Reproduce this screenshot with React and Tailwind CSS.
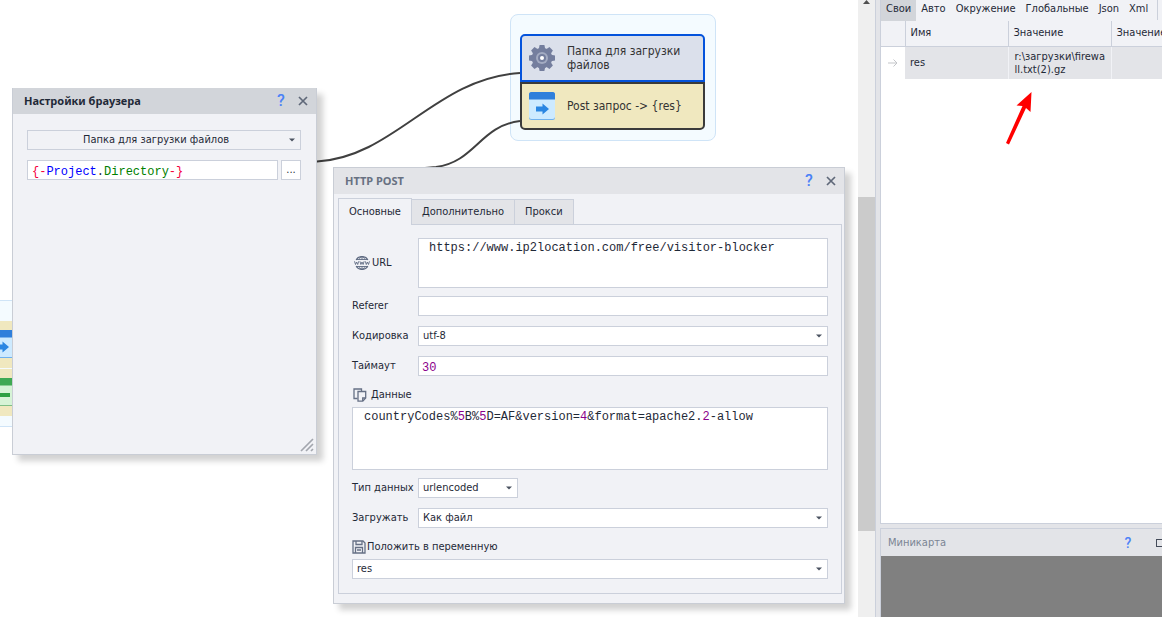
import React from "react";

const UI = "font-['DejaVu_Sans_Condensed','Noto_Sans',sans-serif] text-[11px] leading-[14px] text-[#1f2937]";
const FIELD = "h-5 border border-[#cbd0db] bg-white outline-none rounded-none";
const MONO = "font-['Liberation_Mono',monospace] text-[12px] leading-[14px]";

function Caret() {
  return (
    <svg className="pointer-events-none absolute right-1.5 top-2" width="6" height="4" viewBox="0 0 6 4" aria-hidden="true">
      <path d="M0 0.5H6L3 3.5Z" fill="#4b5260" />
    </svg>
  );
}

function Select({ id, value, label, className = "", selectClass = "bg-white pl-1 text-left" }) {
  return (
    <div className={"relative " + className}>
      <select
        id={id}
        aria-label={label}
        defaultValue={value}
        className={"block h-5 w-full appearance-none rounded-none border border-[#cbd0db] pr-4 outline-none " + selectClass}
      >
        <option>{value}</option>
      </select>
      <Caret />
    </div>
  );
}

function WindowHeader({ title, className }) {
  return (
    <header className={"flex h-[26px] items-center pl-[11px] pr-[7px] " + className}>
      <h2 className="flex-1 font-['Noto_Sans',sans-serif] text-[11px] font-bold">{title}</h2>
      <button type="button" aria-label="Справка" className="mr-2.5 w-3 text-[16px] font-medium leading-4 text-[#4c82f7] font-[Roboto,sans-serif]">
        ?
      </button>
      <button type="button" aria-label="Закрыть" className="flex h-3 w-3 items-center justify-center">
        <svg width="10" height="10" viewBox="0 0 10 10" aria-hidden="true">
          <path d="M1 1L9 9M9 1L1 9" stroke="#5f6879" strokeWidth="1.7" />
        </svg>
      </button>
    </header>
  );
}

function GearIcon() {
  const teeth = [0, 45, 90, 135, 180, 225, 270, 315];
  return (
    <svg width="28" height="28" viewBox="0 0 28 28" aria-hidden="true">
      <g fill="#747e9e">
        {teeth.map((a) => (
          <path key={a} d="M10.800 5L11.600 1H16.400L17.200 5Z" transform={`rotate(${a} 14 14)`} />
        ))}
        <circle cx="14" cy="14" r="10.3" />
      </g>
      <circle cx="14" cy="14" r="6" fill="#a3abc2" />
      <circle cx="14" cy="14" r="4" fill="#747e9e" />
      <circle cx="14" cy="14" r="2" fill="#fff" />
    </svg>
  );
}

function PageIcon({ green = false }) {
  return (
    <svg width="28" height="28" viewBox="0 0 28 28" aria-hidden="true">
      <rect x="1" y="0" width="26" height="28" rx="2.5" fill={green ? "#7fbf87" : "#6fb1ee"} />
      <path d="M1 7H27V25Q27 27 24.500 27H3.500Q1 27 1 25Z" fill={green ? "#d6f3d6" : "#cdeaff"} />
      <path d="M3.500 0H24.500Q27 0 27 2.500V7.500H1V2.500Q1 0 3.500 0Z" fill={green ? "#3fa953" : "#2f7fdb"} />
      {green ? (
        <path d="M8 15H22V19H8Z" fill="#2ea043" />
      ) : (
        <path d="M8 14.500H14.500V11.500L21 17L14.500 22.500V19.500H8Z" fill="#2a86e2" />
      )}
    </svg>
  );
}

function WwwIcon() {
  return (
    <svg width="16" height="14" viewBox="0 0 16 14" aria-hidden="true" fill="none" stroke="#5f6b82">
      <path d="M2.200 4C3.300 1.800 5.500 0.600 8 0.600S12.700 1.800 13.800 4M2.200 10C3.300 12.200 5.500 13.400 8 13.400S12.700 12.200 13.800 10" strokeWidth="1.300" />
      <path d="M8 0.600V3.500M8 10.500V13.400M5.200 3.500C5.600 2.200 6.500 1 8 0.600C9.500 1 10.400 2.200 10.800 3.500M5.200 10.500C5.600 11.800 6.500 13 8 13.400C9.500 13 10.400 11.800 10.800 10.500M2.500 3.500H13.500M2.500 10.500H13.500" strokeWidth="0.9" />
      <path d="M0.500 5.300L1.500 8.500L2.600 6L3.700 8.500L4.700 5.300M5.900 5.300L6.900 8.500L8 6L9.100 8.500L10.100 5.300M11.300 5.300L12.300 8.500L13.400 6L14.500 8.500L15.500 5.300" strokeWidth="0.9" />
    </svg>
  );
}

function CopyIcon() {
  return (
    <svg width="14" height="14" viewBox="0 0 14 14" aria-hidden="true" fill="none" stroke="#667085" strokeWidth="1.300">
      <path d="M4.500 10.500H1V1H8.500V3" />
      <path d="M5 3.500H12.700V10L9.800 13.200H5Z" />
      <path d="M12.500 10H9.700V13" />
    </svg>
  );
}

function SaveIcon() {
  return (
    <svg width="14" height="14" viewBox="0 0 14 14" aria-hidden="true" fill="none" stroke="#667085" strokeWidth="1.300">
      <path d="M1 1H11L13 3V13H1Z" />
      <path d="M4 1V4.500H10V1M3.500 13V7.500H10.500V13M5 10H9" />
    </svg>
  );
}

function NodeGroup() {
  return (
    <section className="absolute left-[510px] top-[14px] w-[206px] rounded-lg border border-[#cfe4f7] bg-[#f4fbff] pb-2.5 pl-[9px] pr-2.5 pt-[19px] font-['DejaVu_Sans_Condensed','Noto_Sans',sans-serif] text-[12px] leading-[14px] text-[#333]">
      <div className="flex h-12 items-center gap-[11px] rounded-t-[5px] border-2 border-[#0453dc] bg-[#dbe0eb] px-1.5">
        <GearIcon />
        <p className="flex-1">Папка для загрузки файлов</p>
      </div>
      <div className="flex h-12 items-center gap-[11px] rounded-b-[5px] border-2 border-[#3b3b3b] bg-[#f0e8bf] px-1.5">
        <PageIcon />
        <p className="flex-1">Post запрос -&gt; {"{res}"}</p>
      </div>
    </section>
  );
}

function BackGroup() {
  return (
    <section aria-hidden="true" className="absolute -left-[30px] top-[300px] w-[206px] rounded-lg border border-[#cfe4f7] bg-[#f4fbff] px-[9px] pb-2.5 pt-5">
      <div className="flex h-[47px] items-start bg-[#f0e8bf] px-2 pt-[9px]">
        <PageIcon />
      </div>
      <div className="mt-px flex h-[47px] items-start bg-[#f0e8bf] px-2 pt-[9px]">
        <PageIcon green />
      </div>
    </section>
  );
}

function BrowserSettings() {
  return (
    <section className={"absolute left-3 top-[88px] flex h-[367px] w-[305px] flex-col border border-[#c9cdd5] bg-[#f1f2f6] shadow-[6px_6px_6px_rgba(0,0,0,0.18)] " + UI}>
      <WindowHeader title="Настройки браузера" className="-mt-px bg-[#d2d5da]" />
      <div className="flex flex-1 flex-col gap-2.5 pl-3.5 pr-[15px] pt-4">
        <Select label="Действие" value="Папка для загрузки файлов" selectClass="bg-[#f1f2f6] text-center" />
        <div className="flex gap-[3px]">
          <div className={"relative flex-1 " + FIELD}>
            <div aria-hidden="true" className={"pointer-events-none absolute inset-0 flex items-center whitespace-pre pl-1 pt-1 " + MONO}>
              <span className="text-[#f5003d]">{"{-"}</span>
              <span className="text-[#0000ff]">Project</span>
              <span>.</span>
              <span className="text-[#008000]">Directory</span>
              <span className="text-[#f5003d]">{"-}"}</span>
            </div>
            <input
              aria-label="Папка"
              defaultValue="{-Project.Directory-}"
              className={"block h-full w-full bg-transparent pl-1 pt-1 text-transparent caret-black outline-none " + MONO}
            />
          </div>
          <button type="button" aria-label="Обзор" className={"w-5 leading-4 " + FIELD}>
            ...
          </button>
        </div>
      </div>
      <svg className="mb-0.5 mr-0.5 self-end" width="14" height="14" viewBox="0 0 14 14" aria-hidden="true">
        <path d="M1 13L13 1M6 13L13 6M11 13L13 11" stroke="#a3a7ae" strokeWidth="1.700" />
      </svg>
    </section>
  );
}

function Row({ label, id, children, className = "" }) {
  return (
    <div className={"flex items-center " + className}>
      <label htmlFor={id} className="w-[66px] shrink-0 whitespace-nowrap">
        {label}
      </label>
      {children}
    </div>
  );
}

function HttpPost() {
  const purple = "text-[#8b008b]";
  return (
    <section className={"absolute left-[333px] top-[167px] w-[512px] border border-[#c9cdd5] bg-[#f1f2f6] shadow-[6px_6px_6px_rgba(0,0,0,0.18)] " + UI}>
      <WindowHeader title="HTTP POST" className="bg-[#e3e4e8] text-[#687182]" />
      <div className="pb-[9px] pl-1 pr-0.5 pt-1">
        <div role="tablist" className="relative z-10 -mb-px flex items-end">
          <button type="button" role="tab" aria-selected="true" className="h-[27px] border border-b-0 border-[#cbd0db] bg-[#f1f2f6] px-2.5">
            Основные
          </button>
          <button type="button" role="tab" aria-selected="false" className="h-[26px] border border-l-0 border-[#cbd0db] bg-[#e3e4e8] px-2.5">
            Дополнительно
          </button>
          <button type="button" role="tab" aria-selected="false" className="h-[26px] border border-l-0 border-[#cbd0db] bg-[#e3e4e8] px-2.5">
            Прокси
          </button>
        </div>
        <div role="tabpanel" className="border border-[#cbd0db] px-[13px] pb-3.5 pt-[13px]">
          <Row
            id="url"
            label={
              <span className="flex items-center gap-0.5 pl-0.5">
                <WwwIcon />
                URL
              </span>
            }
          >
            <textarea
              id="url"
              defaultValue="https://www.ip2location.com/free/visitor-blocker"
              className={"block h-[50px] min-w-0 flex-1 resize-none border border-[#cbd0db] bg-white px-2.5 py-0.5 outline-none " + MONO}
            />
          </Row>
          <Row id="referer" label="Referer" className="mt-2">
            <input id="referer" className={"min-w-0 flex-1 px-1 " + FIELD} />
          </Row>
          <Row id="charset" label="Кодировка" className="mt-2.5">
            <Select id="charset" value="utf-8" className="flex-1" />
          </Row>
          <Row id="timeout" label="Таймаут" className="mt-2.5">
            <input id="timeout" defaultValue="30" className={"min-w-0 flex-1 px-[3px] pt-1 " + FIELD + " " + MONO + " " + purple} />
          </Row>
          <label htmlFor="data" className="mt-3 flex items-center gap-1 pl-px">
            <CopyIcon />
            Данные
          </label>
          <div className="relative mt-[5px] h-[63px] border border-[#cbd0db] bg-white">
            <div aria-hidden="true" className={"pointer-events-none absolute inset-0 whitespace-pre-wrap px-[11px] py-0.5 " + MONO}>
              countryCodes%<span className={purple}>5</span>B%<span className={purple}>5</span>D=AF&amp;version=
              <span className={purple}>4</span>&amp;format=apache2.<span className={purple}>2</span>-allow
            </div>
            <textarea
              id="data"
              defaultValue="countryCodes%5B%5D=AF&version=4&format=apache2.2-allow"
              className={"block h-full w-full resize-none bg-transparent px-[11px] py-0.5 text-transparent caret-black outline-none " + MONO}
            />
          </div>
          <Row id="dtype" label="Тип данных" className="mt-2">
            <Select id="dtype" value="urlencoded" className="w-[100px]" />
          </Row>
          <Row id="load" label="Загружать" className="mt-2.5">
            <Select id="load" value="Как файл" className="flex-1" />
          </Row>
          <label htmlFor="variable" className="mt-3 flex items-center gap-px">
            <SaveIcon />
            Положить в переменную
          </label>
          <Select id="variable" value="res" className="mt-[5px]" />
        </div>
      </div>
    </section>
  );
}

function Canvas() {
  return (
    <main className="relative min-w-0 flex-1 overflow-hidden bg-white">
      <BackGroup />
      <NodeGroup />
      <svg className="pointer-events-none absolute left-0 top-0" width="858" height="617" viewBox="0 0 858 617" fill="none" stroke="#404040" strokeWidth="2" aria-hidden="true">
        <path d="M300 163L317 161.500C395 157 435 78 520 73" />
        <path d="M425 168L436 167C475 162 480 126 520 121" />
      </svg>
      <BrowserSettings />
      <HttpPost />
    </main>
  );
}

function CanvasScrollbar() {
  return (
    <div aria-hidden="true" className="flex w-[17px] flex-col items-center bg-[#efefef]">
      <svg className="h-[197px] shrink-0" width="17" height="197" viewBox="0 0 17 197">
        <path d="M5 4L8.500 0L12 4Z" fill="#505050" />
      </svg>
      <div className="h-[334px] w-full bg-[#cbcbcb]" />
    </div>
  );
}

function Variables() {
  const tabs = ["Авто", "Окружение", "Глобальные", "Json", "Xml"];
  return (
    <section className="relative flex min-h-0 flex-1 flex-col overflow-hidden border-b border-l border-[#cbd0db] bg-white">
      <div role="tablist" className="flex h-[21px] shrink-0 bg-[#f1f2f6]">
        <button type="button" role="tab" aria-selected="true" className="bg-[#d2d5da] px-[5px] pb-1">
          Свои
        </button>
        {tabs.map((t) => (
          <button key={t} type="button" role="tab" aria-selected="false" className="px-[5px] pb-1">
            {t}
          </button>
        ))}
        <span className="ml-1 h-5 border-l border-[#cbd0db]" />
      </div>
      <table className="w-[333px] table-fixed border-collapse text-left">
        <colgroup>
          <col className="w-6" />
          <col className="w-[103px]" />
          <col className="w-[103px]" />
          <col className="w-[103px]" />
        </colgroup>
        <thead>
          <tr className="h-[25px] border-b border-[#cbd0db] bg-[#f1f2f6]">
            <th className="border-r border-[#cbd0db]" aria-label="Строка" />
            <th className="border-r border-[#cbd0db] px-[5px] font-normal">Имя</th>
            <th className="border-r border-[#cbd0db] px-[5px] font-normal">Значение</th>
            <th className="whitespace-nowrap px-[5px] font-normal">Значение</th>
          </tr>
        </thead>
        <tbody>
          <tr className="h-[33px] bg-[#e3e4e8] leading-[13px]">
            <td className="bg-white">
              <svg className="mx-auto" width="10" height="8" viewBox="0 0 10 8" aria-hidden="true" fill="none" stroke="#c3c5c9">
                <path d="M0 4H9M5.500 0.500L9 4L5.500 7.500" />
              </svg>
            </td>
            <td className="border-r border-[#f1f2f6] px-[5px]">res</td>
            <td className="break-all border-r border-[#f1f2f6] pl-1.5 pr-1">r:\загрузки\firewall.txt(2).gz</td>
            <td />
          </tr>
        </tbody>
      </table>
      <svg className="pointer-events-none absolute left-[124px] top-[90px]" width="30" height="56" viewBox="0 0 30 56" aria-hidden="true">
        <path d="M26.500 2L25.500 22L21 18L4 54.500L1 53L17.500 16L11.500 15.500Z" fill="#ff0000" />
      </svg>
    </section>
  );
}

function Minimap() {
  return (
    <section className="flex h-[89px] shrink-0 flex-col border-l border-t border-[#cbd0db]">
      <header className="flex h-[27px] shrink-0 items-center pl-[7px]">
        <h2 className="flex-1 text-[#7b8494]">Миникарта</h2>
        <button type="button" aria-label="Справка" className="mr-[22px] w-3 text-[14px] font-medium leading-4 text-[#4c82f7] font-[Roboto,sans-serif]">
          ?
        </button>
        <button type="button" aria-label="Развернуть" className="w-1.5 overflow-hidden">
          <span className="block h-2 w-2 border border-[#444b59]" />
        </button>
      </header>
      <div className="flex-1 bg-[#808080]" />
    </section>
  );
}

export default function App() {
  return (
    <div className="flex h-screen overflow-hidden bg-white">
      <Canvas />
      <CanvasScrollbar />
      <aside className={"flex w-[287px] shrink-0 flex-col gap-1 border-l border-[#cbd0db] bg-[#e3e4e8] pl-1 " + UI}>
        <Variables />
        <Minimap />
      </aside>
    </div>
  );
}
